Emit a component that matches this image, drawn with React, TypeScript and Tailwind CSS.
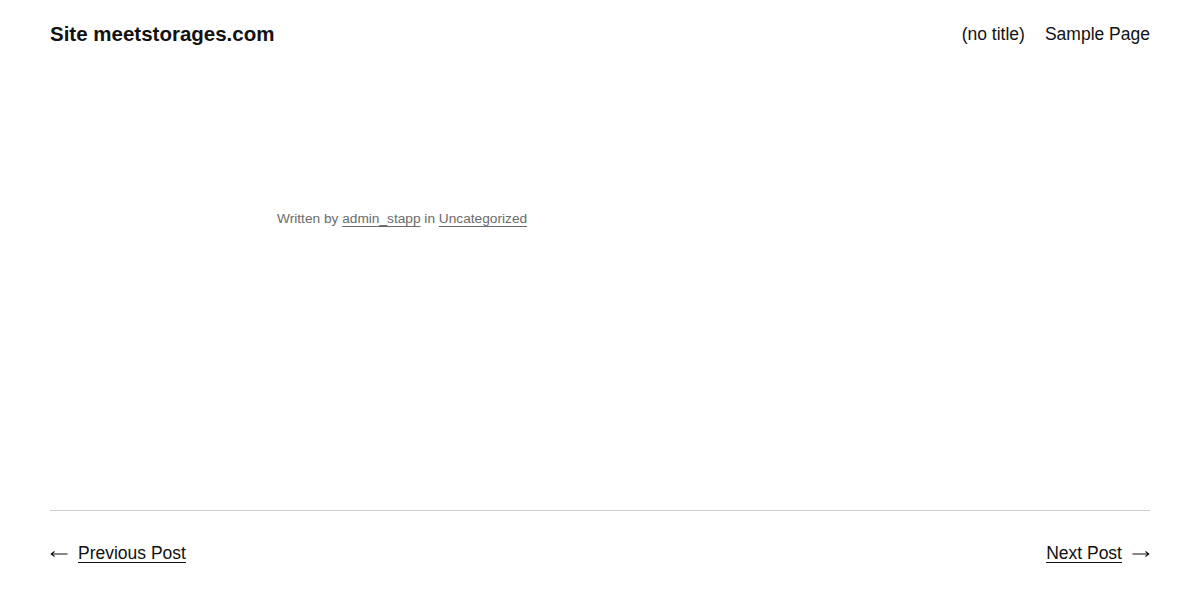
import React from "react";

function Arrow({ dir }: { dir: "left" | "right" }) {
  return (
    <svg width="18" height="10" viewBox="0 0 18 10" className={dir === "right" ? "mt-[2px]" : "-scale-x-100 mt-[2px]"}>
      <path d="M0.5 5 H16.5 M13.5 2.5 L16.8 5 L13.5 7.5" fill="none" stroke="#111" strokeWidth="1.1" />
    </svg>
  );
}

export default function App() {
  return (
    <div className="w-[1200px] h-[600px] bg-white text-[#111] overflow-hidden" style={{ fontFamily: '"Liberation Sans", Arial, sans-serif' }}>
      <header className="flex items-center justify-between px-[50px] h-[68px]">
        <div className="text-[20.5px] font-bold">Site meetstorages.com</div>
        <nav className="flex gap-[20px] text-[17.5px]">
          <span>(no title)</span>
          <span>Sample Page</span>
        </nav>
      </header>
      <main className="w-[650px] mx-auto pl-[2px] pt-[142px] h-[442px]">
        <div className="text-[13.7px] text-[#6b6b6b] leading-[18px]">
          Written by <span className="underline underline-offset-[3px]">admin_stapp</span> in{" "}
          <span className="underline underline-offset-[3px]">Uncategorized</span>
        </div>
      </main>
      <div className="mx-[50px] border-t border-[#cfcfcf]"></div>
      <div className="flex justify-between px-[50px] pt-[29px] text-[17.5px]">
        <div className="flex items-center gap-[10px]">
          <Arrow dir="left" />
          <span className="underline underline-offset-[3px]">Previous Post</span>
        </div>
        <div className="flex items-center gap-[10px]">
          <span className="underline underline-offset-[3px]">Next Post</span>
          <Arrow dir="right" />
        </div>
      </div>
    </div>
  );
}
